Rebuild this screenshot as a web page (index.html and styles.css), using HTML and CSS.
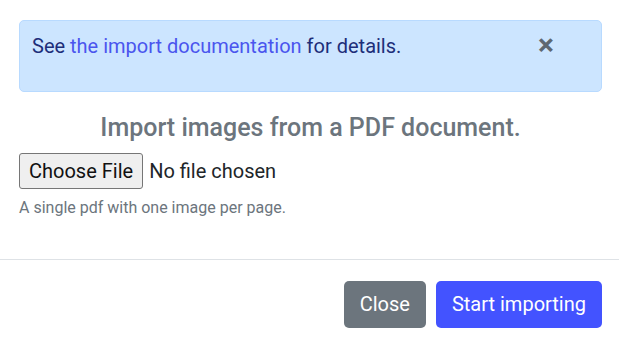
FILE: index.html
```html
<!DOCTYPE html>
<html lang="en">
<head>
  <meta charset="UTF-8">
  <title>Import images</title>
  <link rel="stylesheet" href="styles.css">
</head>
<body>
  <div class="modal">
    <div class="modal-body">
      <div class="alert">
        <span>See <a href="#">the import documentation</a> for details.</span>
        <button type="button" class="close">&times;</button>
      </div>
      <h5 class="title">Import images from a PDF document.</h5>
      <input type="file" class="file-input">
      <small class="help">A single pdf with one image per page.</small>
    </div>
    <div class="modal-footer">
      <button type="button" class="btn btn-secondary">Close</button>
      <button type="button" class="btn btn-primary">Start importing</button>
    </div>
  </div>
</body>
</html>
```

FILE: styles.css
```css
body {
  margin: 0;
  font-family: Roboto, "Liberation Sans", Arial, sans-serif;
  background-color: #fff;
  color: #212529;
}
.modal-body {
  padding: 20px 17px 39px 19px;
}
.alert {
  display: flex;
  justify-content: space-between;
  align-items: flex-start;
  height: 72px;
  box-sizing: border-box;
  padding: 10px 47px 0 12px;
  background-color: #cce5ff;
  border: 1px solid #b8daff;
  border-radius: 5px;
  color: #1d2e7a;
  font-size: 20px;
  line-height: 30px;
}
.alert a {
  color: #4a55ee;
  text-decoration: none;
}
.close {
  background: none;
  border: none;
  padding: 0;
  font-family: inherit;
  font-size: 30px;
  font-weight: 700;
  line-height: 28px;
  color: #5d6771;
  cursor: pointer;
}
.title {
  margin: 21px 0 10px;
  text-align: center;
  font-size: 25px;
  font-weight: 500;
  line-height: 30px;
  color: #6c757d;
}
.file-input {
  display: block;
  height: 36px;
  font-family: inherit;
  font-size: 20px;
  color: #212529;
}
.file-input::file-selector-button {
  height: 36px;
  margin-right: 6px;
  padding: 0 9px;
  background-color: #efefef;
  border: 1px solid #767676;
  border-radius: 3px;
  font-family: inherit;
  font-size: 20px;
  color: #111;
}
.help {
  display: block;
  margin-top: 7px;
  font-size: 16px;
  line-height: 24px;
  color: #6c757d;
}
.modal-footer {
  display: flex;
  justify-content: flex-end;
  gap: 10px;
  padding: 21px 17px 18px;
  border-top: 1px solid #dee2e6;
}
.btn {
  padding: 9px 15px;
  border: 1px solid transparent;
  border-radius: 5px;
  font-family: inherit;
  font-size: 20px;
  line-height: 27px;
  color: #fff;
  cursor: pointer;
}
.btn-secondary {
  background-color: #6c757d;
}
.btn-primary {
  background-color: #4353ff;
}
```
